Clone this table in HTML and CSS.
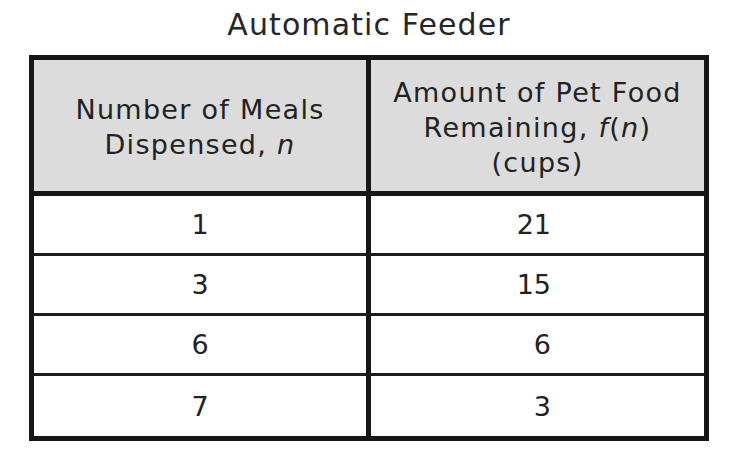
FILE: index.html
```html
<!DOCTYPE html>
<html lang="en">
<head>
<meta charset="utf-8">
<title>Automatic Feeder</title>
<link rel="stylesheet" href="styles.css">
</head>
<body>
<div class="figure">
  <h1 class="title">Automatic Feeder</h1>
  <table class="feeder">
    <thead>
      <tr>
        <th class="col-n">Number of Meals<br>Dispensed, <i>n</i></th>
        <th class="col-f">Amount of Pet Food<br>Remaining, <i>f</i>(<i>n</i>)<br>(cups)</th>
      </tr>
    </thead>
    <tbody>
      <tr><td class="col-n">1</td><td class="col-f"><span class="num">21</span></td></tr>
      <tr><td class="col-n">3</td><td class="col-f"><span class="num">15</span></td></tr>
      <tr><td class="col-n">6</td><td class="col-f"><span class="num">6</span></td></tr>
      <tr><td class="col-n">7</td><td class="col-f"><span class="num">3</span></td></tr>
    </tbody>
  </table>
</div>
</body>
</html>
```

FILE: styles.css
```css
html, body {
  margin: 0;
  padding: 0;
  background: #ffffff;
}

body {
  font-family: "DejaVu Sans", Verdana, sans-serif;
  color: #222222;
  width: 732px;
  height: 464px;
}

.figure {
  padding-left: 29px;
}

.title {
  margin: 0;
  padding-top: 7px;
  width: 680px;
  text-align: center;
  font-weight: normal;
  font-size: 30px;
  line-height: 35px;
  letter-spacing: 1.1px;
  color: #262626;
}

.feeder {
  margin-top: 13px;
  width: 680px;
  border: 5px solid #161616;
  border-collapse: separate;
  border-spacing: 0;
  font-size: 27px;
  line-height: 35px;
  table-layout: fixed;
}

.feeder th,
.feeder td {
  padding: 0;
  text-align: center;
  vertical-align: middle;
  font-weight: normal;
}

.feeder th {
  background: #dcdcdc;
  height: 128px;
  padding-top: 3px;
  border-bottom: 5px solid #161616;
  letter-spacing: 1.3px;
}

.feeder td {
  height: 57px;
  border-bottom: 3px solid #1c1c1c;
}

.feeder tbody tr:last-child td {
  border-bottom: none;
  height: 60px;
}

.feeder .col-n {
  width: 332px;
  border-right: 5px solid #161616;
}

.feeder i {
  font-style: italic;
}

.num {
  display: inline-block;
  width: 35px;
  text-align: right;
  padding-right: 8px;
}
```
